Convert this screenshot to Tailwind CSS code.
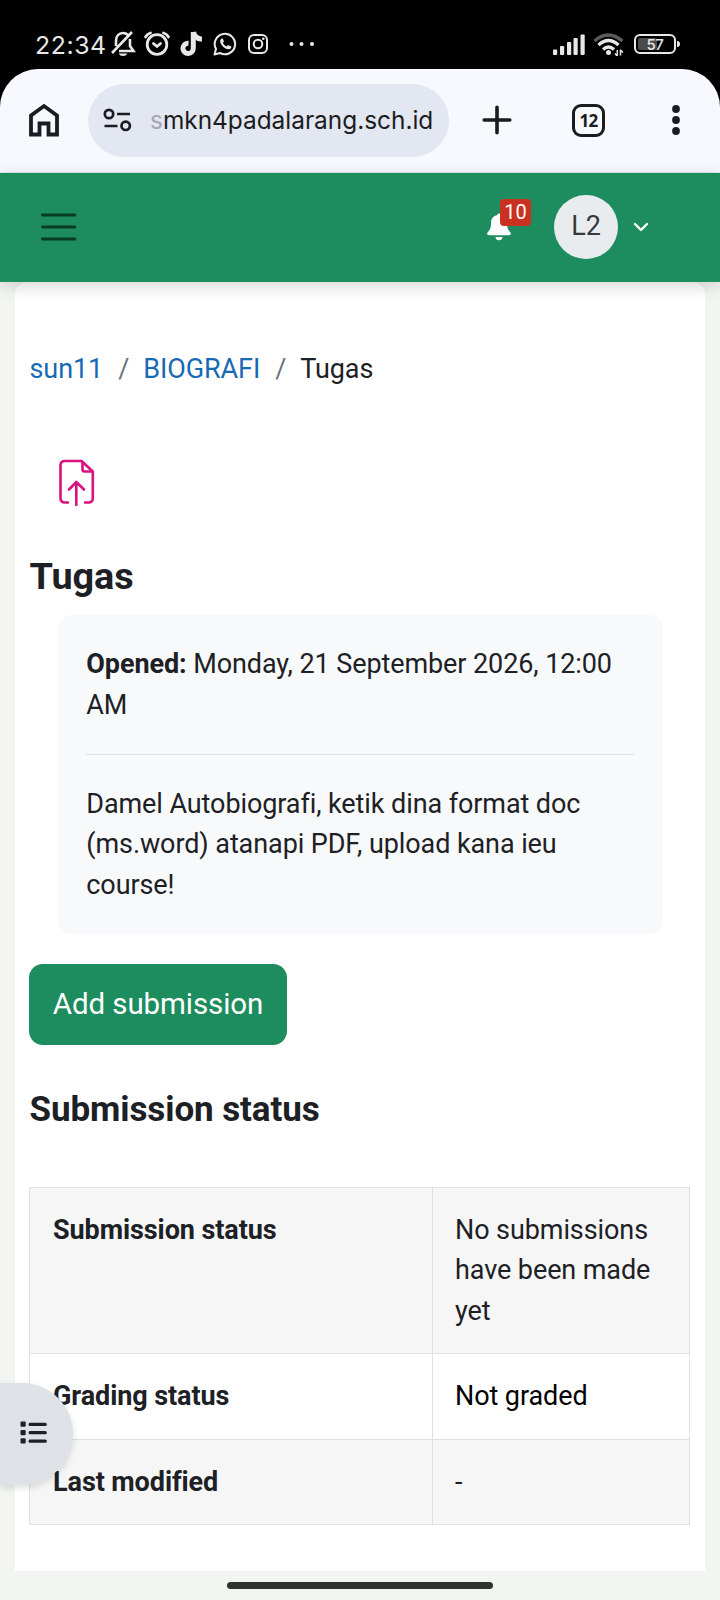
<!DOCTYPE html>
<html lang="en">
<head>
  <meta charset="UTF-8" />
  <meta name="viewport" content="width=device-width, initial-scale=1.0"/>
  <title>BIOGRAFI: Tugas</title>
  <script src="https://cdn.jsdelivr.net/npm/@tailwindcss/browser@4"></script>
</head>
<body class="bg-[#f3f5f2] text-[#1d2125] font-[Roboto,sans-serif] w-[720px] h-[1600px] overflow-hidden relative">

  <!-- phone status bar + browser toolbar -->
  <header class="bg-black">
    <div class="h-[69px] pt-[19px] pl-[35px] pr-10 flex items-center justify-between text-[#e8e8e8]">
      <div class="flex items-center">
        <span class="font-[Inter,sans-serif] text-[24.8px] leading-none w-[75px] pt-[2px] tracking-[0.6px]">22:34</span>
        <svg class="w-[26px] h-[28px]" viewBox="110 31 26 28" fill="none" stroke="currentColor" stroke-width="2.600">
          <path d="M116 47V42C116 37 119 34 123 34C125 34 127 35 128 36M130 40V47L133.500 52H119M132 33L112 54"/>
          <path d="M118.500 54.500H127.500Q126 57 123 57Q120 57 118.500 54.500Z" fill="currentColor" stroke="none"/>
        </svg>
        <svg class="w-[28px] h-[28px] ml-[7px]" viewBox="143 30 28 28" fill="none" stroke="currentColor" stroke-width="2.800" stroke-linecap="round">
          <circle cx="157" cy="44.500" r="9.800"/>
          <path d="M145.500 37Q147 34 150.500 33M168.500 37Q167 34 163.500 33" />
          <path d="M153.500 43.500L157 46.500L160.500 43.500" stroke-width="2.8"/>
        </svg>
        <svg class="w-[22px] h-[26px] ml-[9px]" viewBox="180 31 22 26" fill="none" stroke="currentColor" stroke-width="5">
          <path d="M193.300 32V48A5.200 5.200 0 1 1 188.500 43.200"/>
          <path d="M193.500 32Q194.500 38.500 202 39.200"/>
        </svg>
        <svg class="w-[24px] h-[26px] ml-[11px]" viewBox="213 31 24 26" fill="none" stroke="currentColor" stroke-width="2">
          <path d="M214.500 54.500L216 49A10.200 10.200 0 1 1 220 53Z" stroke-linejoin="round"/>
          <path d="M221.500 38.500Q219.500 40 220.300 42.500Q222.500 48 228 49.300Q230.500 49.600 231.300 47.500V46.500L228 45L226.500 46.500Q224 45.500 222.800 42.800L224 41.500L222.800 38.500Z" fill="currentColor" stroke="none"/>
        </svg>
        <svg class="w-[22px] h-[22px] ml-[10px]" viewBox="247 33 22 22" fill="none" stroke="currentColor" stroke-width="2">
          <rect x="249" y="35" width="18" height="18" rx="5"/>
          <circle cx="258" cy="44" r="4.300"/>
          <circle cx="263.300" cy="38.800" r="1.300" fill="currentColor" stroke="none"/>
        </svg>
        <svg class="w-[26px] h-[6px] ml-[20px]" viewBox="288 41 26 6" fill="currentColor">
          <circle cx="290.500" cy="44" r="2"/><circle cx="300.500" cy="44" r="2"/><circle cx="311" cy="44" r="2"/>
        </svg>
      </div>
      <div class="flex items-center">
        <svg class="w-[34px] h-[24px]" viewBox="552 32 34 24" fill="currentColor">
          <rect x="553" y="49.500" width="4.200" height="5.500" rx="1"/>
          <rect x="560" y="46" width="4.200" height="9" rx="1"/>
          <rect x="567" y="42" width="4.200" height="13" rx="1"/>
          <rect x="573.500" y="38" width="4.200" height="17" rx="1"/>
          <rect x="580.500" y="34.500" width="4.200" height="20.500" rx="1"/>
        </svg>
        <svg class="w-[32px] h-[24px] ml-[7px]" viewBox="593 32 32 24" fill="none" stroke="currentColor" stroke-width="3.200">
          <path d="M594.500 41Q608 29 622.500 41" stroke="#5c5c5c"/>
          <path d="M598.500 45Q608.500 36 618.500 45"/>
          <path d="M603 49.500Q608.500 44.500 614 49.500"/>
          <circle cx="608.500" cy="52.500" r="2.500" fill="currentColor" stroke="none"/>
          <path d="M617.300 50V56M614.800 53.500L617.300 56M620.500 55.500V49.500M623 52.500L620.500 50" stroke-width="1.500"/>
        </svg>
        <div class="w-[42px] h-[20px] ml-[9px] rounded-[6px] border-2 border-[#e8e8e8] p-[2px] relative">
          <div class="w-[19px] h-full bg-[#4a4a4a] rounded-[2px]"></div>
          <span class="absolute inset-0 text-center text-[15px] leading-[17px] font-medium font-[Inter,sans-serif] tracking-[-0.3px]">57</span>
        </div>
        <div class="w-[3px] h-[6px] ml-px rounded-r bg-[#e8e8e8]"></div>
      </div>
    </div>

    <div class="h-[104px] bg-[#f7f9ff] border-b border-[#dbe7ea] rounded-t-[38px] pl-7 pb-px flex items-center text-[#1b1c20]">
      <svg class="w-[32px] h-[34px]" viewBox="28 103 32 34" fill="none" stroke="currentColor" stroke-width="3.800">
        <path d="M31 134.500V115.500L44 106L57 115.500V134.500H48.500V123.500H39.500V134.500Z"/>
      </svg>
      <div class="w-[361px] h-[73px] ml-7 rounded-full bg-[#e3e7f1] flex items-center pl-[15px]">
        <svg class="w-[29px] h-[24px]" viewBox="103 108 29 24" fill="none" stroke="currentColor" stroke-width="2.700">
          <circle cx="109" cy="114" r="4.200"/>
          <circle cx="125.700" cy="125.800" r="4.200"/>
          <path d="M117 114H130M104.500 126H117.500"/>
        </svg>
        <span class="ml-[18px] text-[24.4px] leading-none whitespace-nowrap font-[Inter,sans-serif]"><span class="text-[#a5a8b0]">s</span>mkn4padalarang.sch.id</span>
      </div>
      <svg class="w-[30px] h-[30px] ml-[33px]" viewBox="0 0 30 30" stroke="currentColor" stroke-width="3.600" stroke-linecap="round">
        <path d="M15 2.200V27.800M2.200 15H27.800"/>
      </svg>
      <div class="w-[33px] h-[33px] ml-[60px] rounded-[9px] border-[3.500px] border-[#1b1c20] flex items-center justify-center text-[17px] font-bold leading-none tracking-[-0.8px] font-['Noto_Sans',sans-serif]">12</div>
      <svg class="w-[10px] h-[32px] ml-[66px]" viewBox="0 0 10 32" fill="currentColor">
        <circle cx="5" cy="5" r="3.900"/><circle cx="5" cy="16" r="3.900"/><circle cx="5" cy="27" r="3.900"/>
      </svg>
    </div>
  </header>

  <!-- site navbar -->
  <nav class="relative z-10 h-[109px] pb-[2px] bg-[#1d8c5e] shadow-[0_4px_16px_rgba(0,0,0,0.16)] flex items-center justify-between pl-[41px] pr-[71px]">
    <svg class="w-[36px] h-[28px]" viewBox="0 0 36 28" stroke="#0a3b25" stroke-width="2.800" stroke-linecap="round">
      <path d="M1.500 2H34M1.500 14H34M1.500 26H34"/>
    </svg>
    <div class="flex items-center">
      <div class="relative w-[24px] h-[28px]">
        <svg class="w-full h-full" viewBox="0 0 24 28" fill="#fff">
          <path d="M12 0.500C12.900 0.500 13.600 1.200 13.600 2.100C17.800 3 20 6 20 10C20 15.500 21.500 17.500 23.300 19.200C24.400 20.500 23.700 22.300 22 22.300H2C0.300 22.300 -0.400 20.500 0.700 19.200C2.500 17.500 4 15.500 4 10C4 6 6.200 3 10.400 2.100C10.400 1.200 11.100 0.500 12 0.500ZM8.500 24H15.500C15.500 26 14 27.300 12 27.300C10 27.300 8.500 26 8.500 24Z"/>
        </svg>
        <span class="absolute left-[13px] -top-[14px] w-[31px] h-[27px] rounded-[4px] bg-[#ca3120] text-white text-[20px] leading-[27px] text-center">10</span>
      </div>
      <div class="w-[64px] h-[64px] ml-[43px] rounded-full bg-[#e9ecef] text-[#343a40] text-[27px] flex items-center justify-center">L2</div>
      <svg class="w-[16px] h-[12px] ml-[15px]" viewBox="0 0 16 12" fill="none" stroke="#fff" stroke-width="2.400" stroke-linecap="round" stroke-linejoin="round">
        <path d="M2 3L8 9L14 3"/>
      </svg>
    </div>
  </nav>

  <!-- page content -->
  <main class="mx-[15px] h-[1289px] bg-white rounded-t-[14px] px-[14px] pt-[67px] text-[27px] leading-[40.5px] tracking-[-0.09px]">
    <div class="flex pl-[0.5px]">
      <a class="text-[#176ab4]">sun11</a>
      <span class="text-[#6a737b] ml-[15px] mr-[14px]">/</span>
      <a class="text-[#176ab4]">BIOGRAFI</a>
      <span class="text-[#6a737b] ml-[15px] mr-[14px]">/</span>
      <span>Tugas</span>
    </div>

    <svg class="w-[37px] h-[50px] mt-[68px] ml-[29px]" viewBox="59 458 37 50" fill="none" stroke="#d9127f" stroke-width="2.600" stroke-linecap="round" stroke-linejoin="round">
      <path d="M69 502.500H66Q61.500 502.500 61.500 498V465.500Q61.500 461 66 461H82.500L93.800 471.500V498Q93.800 502.500 89.500 502.500H86"/>
      <path d="M83.500 462V469.500Q83.500 471.500 85.500 471.500H93"/>
      <path d="M77.300 505V482M70 489.500L77.300 482L85 489.500"/>
    </svg>

    <h1 class="text-[37.8px] leading-[44px] font-bold mt-[46px] pl-[0.5px]">Tugas</h1>

    <div class="mt-[17px] mx-[28.5px] rounded-[14px] bg-[#f8f9fb] px-[28.8px] pt-[29.8px] h-[319px]">
      <p><b>Opened:</b> Monday, 21 September 2026, 12:00 AM</p>
      <hr class="my-[28.8px] border-[#dee2e6]">
      <p>Damel Autobiografi, ketik dina format doc (ms.word) atanapi PDF, upload kana ieu course!</p>
    </div>

    <button class="block mt-[30px] w-[258px] h-[81px] rounded-[14px] bg-[#1d8c5e] text-white text-[29.5px]">Add submission</button>

    <h3 class="mt-[44px] text-[35px] leading-[41px] font-bold pl-[0.5px]">Submission status</h3>

    <table class="mt-[57px] w-[661px] table-fixed border-collapse text-left">
      <tr class="bg-[#f6f6f7]">
        <th class="w-[403px] border border-[#dee0e3] px-[23px] py-[22px] align-top font-bold">Submission status</th>
        <td class="border border-[#dee0e3] px-[22px] py-[22px]">No submissions have been made yet</td>
      </tr>
      <tr>
        <th class="border border-[#dee0e3] px-[23px] py-[22px] align-top font-bold">Grading status</th>
        <td class="border border-[#dee0e3] px-[22px] py-[22px] text-black">Not graded</td>
      </tr>
      <tr class="bg-[#f6f6f7]">
        <th class="border border-[#dee0e3] px-[23px] py-[22px] align-top font-bold">Last modified</th>
        <td class="border border-[#dee0e3] px-[22px] py-[22px]">-</td>
      </tr>
    </table>
  </main>

  <!-- course index toggle -->
  <button class="absolute left-0 top-[1383px] w-[73px] h-[102px] rounded-r-full bg-[#dee2e6] shadow-[0_3px_7px_rgba(0,0,0,0.13)] flex items-center pl-5 pb-[2px]">
    <svg class="w-[27px] h-[24px]" viewBox="20 1421 27 24" fill="#1d2125">
      <rect x="20.500" y="1421.500" width="5.200" height="5.200" rx="1"/><rect x="28.500" y="1422.700" width="18.300" height="3.200" rx="1.500"/>
      <rect x="20.500" y="1430" width="5.200" height="5.200" rx="1"/><rect x="28.500" y="1431.100" width="18.300" height="3.200" rx="1.500"/>
      <rect x="20.500" y="1438.300" width="5.200" height="5.200" rx="1"/><rect x="28.500" y="1439.500" width="18.300" height="3.200" rx="1.500"/>
    </svg>
  </button>

  <div class="mx-auto mt-[11px] w-[266px] h-[7px] rounded-full bg-[#2f322e]"></div>
</body>
</html>
